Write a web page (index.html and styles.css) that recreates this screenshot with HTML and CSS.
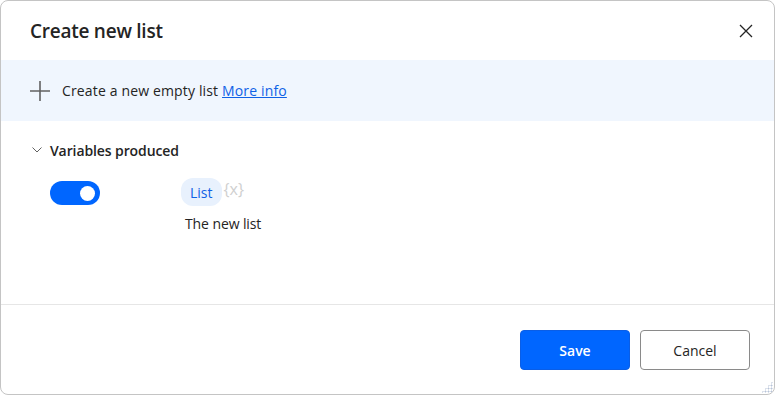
FILE: index.html
```html
<!DOCTYPE html>
<html>
<head>
<meta charset="utf-8">
<link rel="stylesheet" href="styles.css">
</head>
<body>
<div class="dialog">
  <div class="header">
    <h1 class="title">Create new list</h1>
    <button class="close" aria-label="Close">
      <svg width="14" height="14" viewBox="0 0 14 14"><path d="M1 1L13 13M13 1L1 13" stroke="#242424" stroke-width="1.3" fill="none"/></svg>
    </button>
  </div>
  <div class="info">
    <svg class="plus" width="20" height="20" viewBox="0 0 20 20"><path d="M10 0V20M0 10H20" stroke="#616161" stroke-width="1.6" fill="none"/></svg>
    <span class="info-text">Create a new empty list <a class="link" href="#">More info</a></span>
  </div>
  <div class="section">
    <div class="section-head">
      <svg class="chev" width="10" height="6" viewBox="0 0 10 6"><path d="M0.5 0.5L5 5L9.5 0.5" stroke="#616161" stroke-width="1" fill="none"/></svg>
      <span class="section-title">Variables produced</span>
    </div>
    <div class="var-row">
      <div class="toggle"><span class="knob"></span></div>
      <div class="var-info">
        <div class="var-name-row">
          <span class="pill">List</span><span class="braces">{x}</span>
        </div>
        <div class="var-desc">The new list</div>
      </div>
    </div>
  </div>
  <div class="footer">
    <button class="btn primary">Save</button>
    <button class="btn secondary">Cancel</button>
  </div>
  <div class="grip"></div>
</div>
</body>
</html>
```

FILE: styles.css
```css
* { box-sizing: border-box; }
html, body { margin: 0; padding: 0; background: #ffffff; }
body {
  font-family: "Open Sans", "Noto Sans", sans-serif;
  color: #242424;
}
.dialog {
  position: relative;
  width: 775px;
  height: 395px;
  border: 1px solid #c4c4c4;
  border-radius: 8px;
  display: flex;
  flex-direction: column;
  overflow: hidden;
  background: #fff;
}
.header {
  height: 59px;
  display: flex;
  align-items: center;
  justify-content: space-between;
  padding: 0 21px 0 29px;
}
.title {
  margin: 0;
  font-size: 19px;
  font-weight: 600;
  letter-spacing: -0.25px;
  color: #242424;
}
.close {
  border: 0;
  background: transparent;
  padding: 0;
  width: 14px;
  height: 14px;
  display: flex;
}
.info {
  height: 61px;
  background: #f0f6fe;
  display: flex;
  align-items: center;
  padding-left: 29px;
  gap: 12px;
}
.plus { flex: none; }
.info-text {
  font-size: 14px;
  letter-spacing: 0.15px;
  color: #242424;
}
.link {
  color: #0f62e6;
  text-decoration: underline;
}
.section {
  padding: 19px 0 0 30px;
  flex: 1;
  border-bottom: 1px solid #e6e6e6;
}
.section-head {
  display: flex;
  align-items: center;
  gap: 8px;
  height: 20px;
}
.chev { margin-left: 1px; }
.section-title {
  font-size: 14px;
  font-weight: 600;
  letter-spacing: -0.1px;
  color: #242424;
}
.var-row {
  display: flex;
  margin-top: 18px;
}
.toggle {
  margin-left: 19px;
  margin-top: 3px;
  width: 50px;
  height: 24px;
  border-radius: 12px;
  background: #0066ff;
  display: flex;
  align-items: center;
  justify-content: flex-end;
  padding-right: 5px;
}
.knob {
  width: 15px;
  height: 15px;
  border-radius: 50%;
  background: #fff;
}
.var-info {
  margin-left: 81px;
}
.var-name-row {
  display: flex;
  align-items: center;
  gap: 2px;
}
.pill {
  height: 28px;
  padding: 0 9px;
  border-radius: 12px;
  background: #e8f1fd;
  color: #0f62e6;
  font-size: 14px;
  display: flex;
  align-items: center;
}
.braces {
  font-size: 16px;
  color: #cfcfcf;
  margin-top: -6px;
}
.var-desc {
  font-size: 14px;
  letter-spacing: -0.1px;
  margin-top: 8px;
  margin-left: 4px;
  color: #242424;
}
.footer {
  height: 89px;
  display: flex;
  justify-content: flex-end;
  align-items: flex-start;
  padding: 25px 24px 0 0;
  gap: 10px;
}
.btn {
  width: 110px;
  height: 40px;
  border-radius: 4px;
  font-family: "Open Sans", "Noto Sans", sans-serif;
  font-size: 14px;
}
.primary {
  background: #0066ff;
  border: 1px solid #0a5ee6;
  color: #fff;
  font-weight: 600;
}
.secondary {
  background: #fff;
  border: 1px solid #8a8a8a;
  color: #242424;
}
.grip {
  position: absolute;
  right: 1px;
  bottom: 1px;
  width: 12px;
  height: 12px;
  background-image: radial-gradient(circle, #b8c4d8 0.9px, transparent 1.1px);
  background-size: 3px 3px;
  clip-path: polygon(100% 0, 100% 100%, 0 100%);
}
```
